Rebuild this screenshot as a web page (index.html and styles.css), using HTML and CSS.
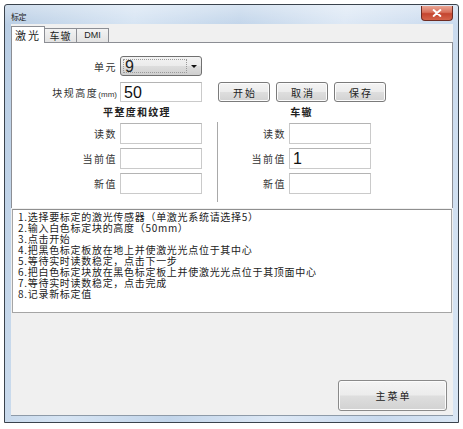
FILE: index.html
```html
<!DOCTYPE html>
<html lang="zh">
<head>
<meta charset="utf-8">
<title>标定</title>
<link rel="stylesheet" href="styles.css">
</head>
<body>
<div class="window">
  <div class="titlebar">
    <span class="title">标定</span>
    <div class="close">
      <svg width="31" height="14" viewBox="0 0 31 14"><path d="M12 4 L19 10 M19 4 L12 10" stroke="#fff" stroke-width="2" stroke-linecap="round"/></svg>
    </div>
  </div>
  <div class="client">
    <div class="tabs">
      <div class="tab active">激光</div>
      <div class="tab">车辙</div>
      <div class="tab dmi">DMI</div>
    </div>
    <div class="panel">
      <div class="row">
        <span class="lbl">单元</span>
        <div class="combo"><span class="val">9</span><span class="arrow"></span></div>
      </div>
      <div class="row row2">
        <span class="lbl">块规高度<span class="mm">(mm)</span></span>
        <div class="field">50</div>
        <div class="btns">
          <button class="btn">开始</button>
          <button class="btn">取消</button>
          <button class="btn">保存</button>
        </div>
      </div>
      <div class="heads">
        <div class="head">平整度和纹理</div>
        <div class="head">车辙</div>
      </div>
      <div class="cols">
        <div class="col left">
          <div class="frow"><span class="lbl">读数</span><div class="field"></div></div>
          <div class="frow"><span class="lbl">当前值</span><div class="field"></div></div>
          <div class="frow"><span class="lbl">新值</span><div class="field"></div></div>
        </div>
        <div class="sep"></div>
        <div class="col right">
          <div class="frow"><span class="lbl">读数</span><div class="field"></div></div>
          <div class="frow"><span class="lbl">当前值</span><div class="field">1</div></div>
          <div class="frow"><span class="lbl">新值</span><div class="field"></div></div>
        </div>
      </div>
    </div>
    <div class="memo">
      <div>1.选择要标定的激光传感器（单激光系统请选择5）</div>
      <div>2.输入白色标定块的高度（50mm）</div>
      <div>3.点击开始</div>
      <div>4.把黑色标定板放在地上并使激光光点位于其中心</div>
      <div>5.等待实时读数稳定，点击下一步</div>
      <div>6.把白色标定块放在黑色标定板上并使激光光点位于其顶面中心</div>
      <div>7.等待实时读数稳定，点击完成</div>
      <div>8.记录新标定值</div>
    </div>
    <div class="footer">
      <button class="btn menu">主菜单</button>
    </div>
  </div>
</div>
</body>
</html>
```

FILE: styles.css
```css
* { box-sizing: border-box; }
html, body { margin: 0; padding: 0; background: #fff; }
body {
  font-family: "Noto Sans CJK SC", "Liberation Sans", sans-serif;
  color: #1e1e1e;
  width: 463px;
  height: 429px;
  overflow: hidden;
}
.window {
  margin: 4px 0 0 4px;
  width: 455px;
  height: 419px;
  border: 1px solid #3a434d;
  border-radius: 3px 3px 0 0;
  padding: 0 5px 6px 6px;
  display: flex;
  flex-direction: column;
  background:
    linear-gradient(to bottom, rgba(255,255,255,0.35), rgba(255,255,255,0) 20px),
    linear-gradient(100deg, #b8cde4 0%, #d6e4f3 25%, #c2d5ea 45%, #dde8f5 65%, #c9daee 85%, #d9e6f4 100%);
}
.titlebar {
  height: 19px;
  display: flex;
  align-items: flex-start;
  position: relative;
}
.title {
  font-size: 8px;
  line-height: 8px;
  margin-top: 8px;
  color: #222;
  letter-spacing: -0.5px;
}
.close {
  position: absolute;
  right: 0;
  top: 1px;
  width: 32px;
  height: 15px;
  border: 1px solid #6e2b22;
  border-top: none;
  border-radius: 0 0 4px 4px;
  background: linear-gradient(to bottom, #e9a593 0%, #d8705b 45%, #c4452f 55%, #d4634a 100%);
  display: flex;
  justify-content: center;
}
.client {
  flex: 1;
  background: #f0f0f0;
  display: flex;
  flex-direction: column;
  border-bottom: 1px solid #8d9aa8;
}
.tabs {
  display: flex;
  align-items: flex-end;
  height: 18px;
  padding-top: 2px;
  position: relative;
  z-index: 1;
}
.tab {
  height: 14px;
  width: 32px;
  border: 1px solid #8c8e94;
  border-bottom: none;
  border-left: none;
  background: linear-gradient(to bottom, #f3f3f3, #e3e3e3);
  font-size: 10px;
  line-height: 13px;
  text-align: center;
  letter-spacing: 1px;
}
.tab.active {
  width: 34px;
  height: 17px;
  margin-bottom: -1px;
  background: #fff;
  border-left: 1px solid #8c8e94;
  font-size: 11px;
  line-height: 16px;
  letter-spacing: 2px;
}
.tab.dmi {
  font-family: "Liberation Sans", sans-serif;
  font-size: 9px;
  letter-spacing: 0;
}
.panel {
  height: 166px;
  background: #fff;
  border: 1px solid #8c8e94;
  border-bottom: none;
  padding-top: 13px;
}
.row {
  display: flex;
  align-items: center;
  height: 20px;
}
.row2 { margin-top: 6px; }
.lbl {
  width: 108px;
  padding-right: 3px;
  text-align: right;
  font-size: 10px;
  letter-spacing: 1.5px;
  color: #333;
  flex: none;
}
.mm {
  font-family: "Liberation Sans", sans-serif;
  font-size: 8px;
  letter-spacing: 0;
}
.combo {
  width: 82px;
  height: 20px;
  border: 1px solid #707070;
  border-radius: 3px;
  background: linear-gradient(to bottom, #f3f3f3 0%, #ebebeb 50%, #dddddd 51%, #cfcfcf 100%);
  display: flex;
  align-items: center;
  position: relative;
}
.combo .val {
  margin: 2px;
  flex: 1;
  height: 14px;
  border: 1px dotted #9a9a9a;
  font-family: "Liberation Sans", sans-serif;
  font-size: 16px;
  line-height: 13px;
  padding-left: 1px;
  margin-right: 14px;
}
.combo .arrow {
  position: absolute;
  right: 4px;
  top: 8px;
  width: 0;
  height: 0;
  border-left: 3px solid transparent;
  border-right: 3px solid transparent;
  border-top: 3px solid #111;
}
.field {
  width: 82px;
  height: 21px;
  border: 1px solid #cacaca;
  border-top-color: #b4b4b4;
  background: #fff;
  font-family: "Liberation Sans", sans-serif;
  font-size: 16px;
  line-height: 19px;
  padding-left: 3px;
  color: #111;
}
.row .field { height: 20px; }
.btns {
  display: flex;
  gap: 6px;
  margin-left: 16px;
}
.btn {
  width: 52px;
  height: 20px;
  border: 1px solid #7b7b7b;
  border-radius: 3px;
  background: linear-gradient(to bottom, #f4f4f4 0%, #ececec 48%, #dedede 52%, #d2d2d2 100%);
  font-family: "Noto Sans CJK SC", sans-serif;
  font-size: 10px;
  letter-spacing: 2px;
  padding: 0 0 0 2px;
  color: #222;
  box-shadow: inset 0 0 0 1px #fcfcfc;
}
.heads {
  display: grid;
  grid-template-columns: 250px 79px;
  height: 16px;
  margin-top: 2px;
}
.head {
  text-align: center;
  font-size: 10px;
  font-weight: bold;
  letter-spacing: 1.3px;
  line-height: 16px;
  color: #222;
}
.cols {
  display: flex;
  margin-top: 2px;
}
.col {
  display: flex;
  flex-direction: column;
  gap: 4px;
  padding-top: 1px;
}
.frow {
  display: flex;
  align-items: center;
}
.frow .lbl { width: 108px; }
.right .frow .lbl { width: 68px; padding-right: 1px; }
.right .field { margin-left: 2px; }
.sep {
  margin-left: 15px;
  width: 2px;
  height: 80px;
  border-left: 1px solid #a9a9a9;
  border-right: 1px solid #fff;
}
.memo {
  margin: 1px 1px 0 1px;
  height: 104px;
  background: #fff;
  border: 1px solid #a5a5a5;
  border-top-color: #8f8f8f;
  padding: 1px 5px;
  font-size: 10px;
  letter-spacing: 0.7px;
  line-height: 11px;
  color: #222;
  white-space: nowrap;
}
.footer {
  flex: 1;
  display: flex;
  justify-content: flex-end;
  align-items: flex-end;
  padding: 0 6px 4px 0;
}
.btn.menu {
  width: 109px;
  height: 31px;
  font-size: 10px;
  letter-spacing: 2px;
  border-color: #8a8a8a;
}
```
